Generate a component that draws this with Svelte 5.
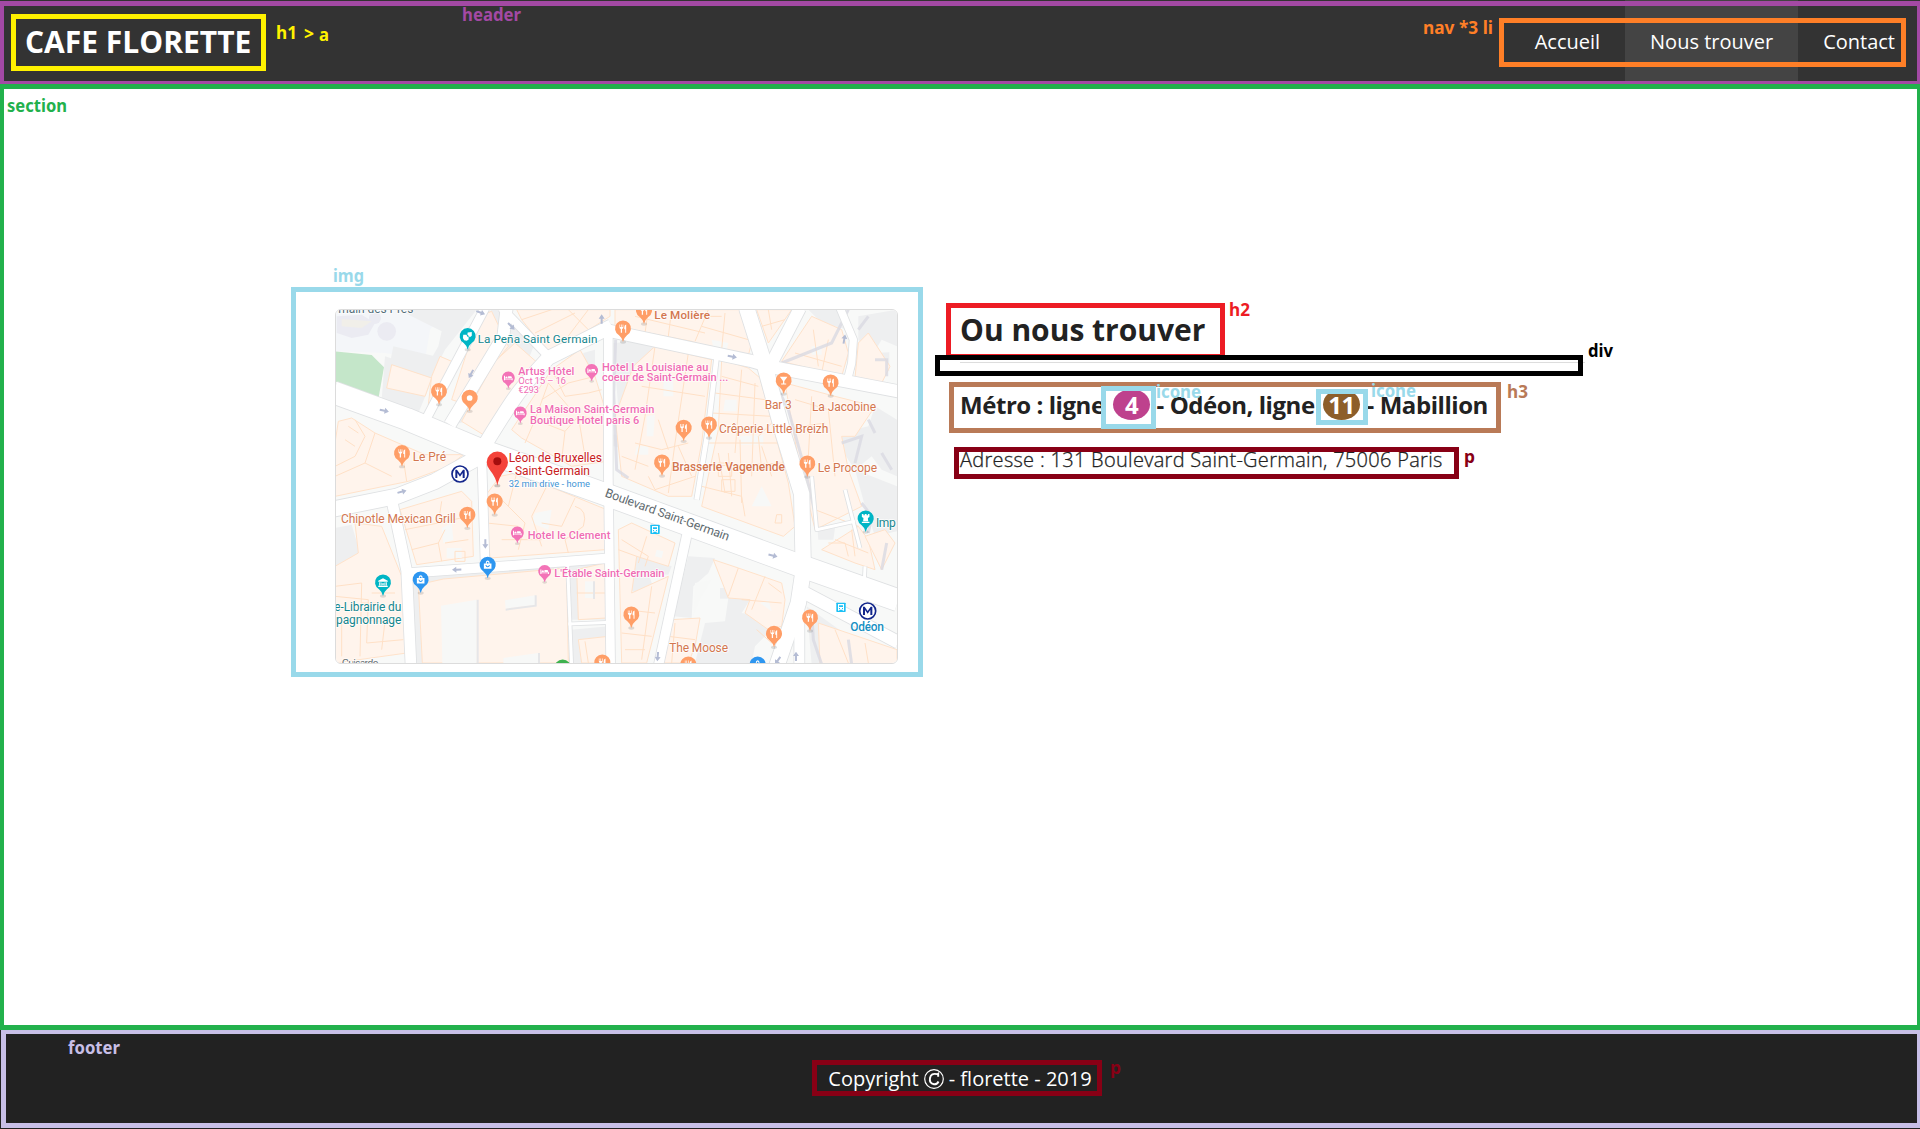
<script>
  const links = [
    { label: 'Accueil', active: false },
    { label: 'Nous trouver', active: true },
    { label: 'Contact', active: false }
  ];

  // Outlined frames drawn over the page: outer left, top, right, bottom.
  const frames = [
    { c: '#a349a4', box: [-1, 1, 1922, 86] },
    { c: '#22b14c', box: [-1, 84, 1922, 1030] },
    { c: '#c8bfe7', box: [1, 1029, 1922, 1128] },
    { c: '#22b14c', box: [-1, 1025, 1925, 1030] },
    { c: '#fff200', box: [11, 14, 266, 71] },
    { c: '#ff7f27', box: [1499, 18, 1906, 67] },
    { c: '#99d9ea', box: [291, 287, 923, 677] },
    { c: '#ed1c24', box: [946, 303, 1225, 359] },
    { c: '#000', box: [935, 355, 1583, 376] },
    { c: '#b97a57', box: [949, 382, 1501, 433] },
    { c: '#99d9ea', box: [1101, 386, 1156, 429] },
    { c: '#99d9ea', box: [1316, 389, 1368, 425] },
    { c: '#880015', box: [954, 447, 1459, 479] },
    { c: '#880015', box: [812, 1060, 1102, 1096] }
  ];

  const notes = [
    { t: 'header', x: 462, y: 21, w: 59, c: '#a349a4' },
    { t: 'h1', x: 276, y: 39, w: 21, c: '#fff200' },
    { t: '>', x: 304, y: 40, w: 10, c: '#fff200' },
    { t: 'a', x: 319, y: 40.5, w: 10, c: '#fff200' },
    { t: 'nav *3 li', x: 1423, y: 34, w: 70, c: '#ff7f27' },
    { t: 'section', x: 7, y: 112, w: 60, c: '#22b14c' },
    { t: 'img', x: 333, y: 282, w: 31, c: '#99d9ea' },
    { t: 'h2', x: 1229, y: 316, w: 21, c: '#ed1c24' },
    { t: 'div', x: 1588, y: 357, w: 25, c: '#000' },
    { t: 'icone', x: 1156, y: 398, w: 45, c: '#99d9ea' },
    { t: 'icone', x: 1371, y: 397, w: 45, c: '#99d9ea' },
    { t: 'h3', x: 1507, y: 398, w: 21, c: '#b97a57' },
    { t: 'p', x: 1464, y: 463, w: 11, c: '#880015' },
    { t: 'footer', x: 68, y: 1054, w: 52, c: '#c8bfe7' },
    { t: 'p', x: 1110, y: 1074, w: 11, c: '#880015' }
  ];

  // The map is drawn at three units per pixel.
  const greys = [
    'M190 0H425L330 120 290 200 270 180 310 110 320 65Z', 'M175 110 300 140 285 195 165 160Z', 'M150 140 300 190 250 310 140 270Z',
    'M390 60 470 0H520L600 100 560 200 480 200Z', 'M375 285 420 260 440 290 420 330 350 345Z',
    'M745 130 780 120V200L740 180Z', 'M0 655 50 645 75 730 35 750 25 785 0 790Z',
    'M40 755H95V800H40Z', 'M105 785H155V815H105Z', 'M835 100 960 90 945 160 890 180 875 240 850 300Z',
    'M1065 0H1100L1090 85 1058 75Z', 'M1020 110 1062 118 1055 165 1015 158Z', 'M835 375H870L880 420 835 410Z',
    'M1420 0H1520L1540 60 1460 40Z', 'M1570 20 1686 0V110L1640 90 1610 140 1570 90Z',
    'M1620 130 1663 128V185H1625Z', 'M1490 375 1600 350 1620 290 1686 330V500L1640 480 1610 440 1560 480Z',
    'M1430 545 1525 530 1515 590 1440 610Z', 'M1560 480 1686 530V665L1620 680 1590 590Z',
    'M1448 665 1500 655 1495 690 1450 690Z', 'M1225 505 1360 520 1355 550 1230 535Z',
    'M905 740 1010 770 1000 795 940 790 960 850 930 880 890 840Z',
    'M1060 740 1140 745 1120 790 1075 830 1070 925 1015 920Z', 'M1180 865 1245 870 1220 910 1290 920 1300 970 1260 1010 1250 1060H1080L1110 940 1170 935Z',
    'M1155 835H1180V867H1155Z', 'M980 1030 1060 1035 1050 1064H975Z', 'M1415 890 1540 980 1550 1064H1430Z',
    'M228 805 300 795 690 765V780L250 825 265 1064H240Z', 'M705 770 810 755 815 930H710Z',
    'M710 960 820 950V1064H712Z'
  ];
  const peaches = [
    'M170 165 290 205 270 260 155 235Z', 'M315 140 350 155 340 200 280 285 290 200Z',
    'M430 20 470 5 520 110 380 280 350 270Z', 'M480 155 540 100 625 175 560 250 530 300 445 375 380 335Z',
    'M545 0H825V20L730 80 640 130 560 30Z', 'M650 180 735 120 780 200 820 330 815 455 710 470 560 385 530 360Z',
    'M10 335 50 325 120 370 270 435 385 435 340 470 220 515 0 560V400Z', 'M495 500 545 490 815 600 812 720 465 745 450 560Z',
    'M195 600 380 545 410 575 415 740 245 765Z', 'M0 770 70 730 60 640 140 650 200 800 215 1030 0 1060Z',
    'M250 825 325 808 695 775 700 1060H262Z',
    'M725 780 810 760 813 925 730 930Z', 'M730 990 820 980V1060H740Z',
    'M840 0H1235L1250 100 1235 155 1070 95 840 50Z', 'M960 110 1130 150 1100 400 1070 560 1000 560 860 500 840 320 895 170Z',
    'M1160 150 1240 175 1275 205 1360 520 1380 650 1345 680 1100 590 1150 360Z', 'M1265 0H1370L1300 100Z',
    'M1430 20 1520 60 1540 130 1520 200 1340 155Z', 'M1570 100 1600 70 1665 170 1640 220 1560 205Z',
    'M1350 220 1500 260 1620 290 1560 380 1520 380 1540 480 1580 590 1440 660 1390 450Z',
    'M1460 720 1570 650 1600 690 1620 780 1560 760Z', 'M1590 680 1650 660 1680 700 1640 780Z',
    'M850 660 890 640 1020 700 1000 770 905 740 890 850 1000 800 935 1060H860Z',
    'M1135 750 1210 775 1340 820 1350 870 1340 950 1300 960 1230 910 1245 870 1180 865Z',
    'M1010 930 1095 925 1080 1010 1060 1060H985Z', 'M1450 940 1686 1020V1064H1455Z'
  ];
  const holes = [
    'M318 888 425 870V1062H322Z', 'M510 872 600 857V885L512 897Z', 'M505 1045 610 1030V1064H505Z',
    'M750 815H775V865H750Z', 'M985 210 1015 200V260H985Z', 'M1215 380 1285 375V405H1215Z',
    'M600 610 650 600 640 660 590 640Z', 'M320 655 350 640 355 690 325 700Z', 'M335 715H380V745H335Z', 'M1170 270H1205V305H1165Z',
    'M1250 590 1280 530 1310 590Z', 'M1080 820 1130 810 1095 870 1075 920Z', 'M1275 880 1300 870 1310 905Z', 'M965 720 985 725 980 745 960 740Z',
    'M1430 110H1460V135H1430Z', 'M1130 90 1180 100 1175 120 1135 115Z', 'M935 320 960 315 955 380H935Z', 'M905 410H940V435H900Z'
  ];
  const lots =
    'M560 30 650 0M600 70 720 10M680 105 760 0M760 60 700 0M570 400 600 330 690 365 730 320 815 330M650 180 690 260 760 250 800 240M600 330 640 220 700 290M690 365 680 450M730 320 750 440M620 270 700 220 780 200' +
    'M60 330 90 380 60 440 0 470M120 370 90 460 170 500M200 415 215 515M0 500 90 460M30 390 60 410M40 350 70 370' +
    'M545 490 520 590 570 640 550 720M640 520 590 620 620 710M720 565 680 650 620 640M720 590Q760 600 745 650L690 690 700 730M490 560 570 640M455 640 550 650M500 690 620 690' +
    'M210 660 310 640 320 575M310 640 400 620M230 720 310 700 330 660M330 700 400 690M310 700 320 755M360 725H390V755H360Z' +
    'M0 830 80 820 75 1040M0 860 100 870 95 1000 205 990M110 850 180 850M60 930 150 935 140 1020M80 880H130M20 920V1040' +
    'M940 0 930 70M1010 0 1000 80M900 20 1110 70M1120 0 1080 95M1170 10 1160 120M1100 50 1240 90M1050 20H1160' +
    'M1160 200 1270 230M1140 250 1290 270M1220 180 1200 430M1260 220 1250 500M1130 310 1310 320M1120 400 1330 400M1150 430 1170 550M1180 430 1190 560M1110 470 1350 460M1215 390 1220 580M1100 530 1220 560 1230 620M1280 410 1310 500M1310 340 1270 380 1280 480M1150 460H1190V500H1150ZM1160 510H1200V545H1160ZM1325 615H1340V640H1320Z' +
    'M960 110 930 320 900 480M1060 130 1020 400 1000 550M920 230 1110 260M900 400 980 420 1060 400M940 500 960 540 1080 500M860 440 940 470M970 330 1000 420M1030 410 1070 500' +
    'M1435 60 1450 170M1480 90 1460 190M1380 130 1520 170M1280 50 1350 30M1300 0 1310 60M1380 270 1480 300 1500 500M1400 350 1470 340M1430 260 1420 440M1440 600 1570 650' +
    'M1480 700 1530 700 1540 740M1550 660 1560 740M1500 690 1600 730M860 690 940 740 930 770M850 720 905 740M935 680 910 760M870 900 960 910M860 970 950 980M950 830 920 1050M870 1020H930' +
    'M1210 775 1180 860M1290 800 1250 900M1220 870 1340 880M1300 820 1340 850M1265 960 1310 1000M1020 940 1010 1060M1000 980 1080 990M1590 1000 1600 1060M1500 960 1540 1060M725 850 810 850M750 995 760 1060';
  const shadows =
    'M842 90 836 250 845 480 880 505M1310 200 1360 300 1410 480 1440 610M1540 0 1490 100 1340 160M1570 60 1600 20M1515 0 1560 120 1555 180M1600 330 1620 370M1520 400 1580 380 1560 460M1640 430 1670 480M1580 580 1610 620 1600 670M1640 780 1655 700M1540 990 1550 1064M1430 900 1435 990 1460 1064M1620 150H1655V200';
  const lightShadows = 'M602 857V888L512 900M428 870V1062M612 1030V1064M777 815V868';
  const roads = [
    ['M450 -5 275 325', 26], ['M515 -5 505 80 345 345', 36], ['M500 -5 640 140', 24],
    ['M445 413Q520 290 550 250T640 145L830 50', 42], ['M815 62 1245 153 1315 173 1690 245', 37],
    ['M1235 -5 1285 153 1345 373 1400 553 1405 780 1390 880 1325 1070', 46], ['M1395 -5 1310 160', 36],
    ['M1515 -5 1555 90 1550 160 1535 220', 22], ['M1146 133 1120 353 1085 570', 14], ['M1060 655 970 1070', 28],
    ['M820 50 820 500 827 1070', 26], ['M-5 598 185 560 300 515 445 435', 46], ['M170 570 215 783 228 1070', 32],
    ['M220 790 530 768 830 745', 28], ['M440 430 450 755', 26], ['M697 743 710 1070', 9], ['M700 943 830 938', 9],
    ['M1430 500 1445 660 1560 635M1530 540 1575 715', 9], ['M1590 770 1588 815', 9],
    ['M1393 840V1070', 30], ['M1410 850 1690 998', 38], ['M-5 248 215 328 440 422 795 548 1395 768 1690 872', 66],
    ['M1310 155V190', 30]
  ];
  const arrows = [
    [437, 9, 20], [529, 50, 45], [408, 193, 118], [148, 303, 12], [800, 28, -90], [1192, 141, 10], [1528, 88, -80],
    [201, 546, -15], [451, 703, 90], [365, 780, 178], [1314, 738, 15], [968, 1041, 95], [1328, 1053, 125], [1383, 1040, -90]
  ];

  const O = '#ff9e67', T = '#00b5c5', K = '#f373b7', B = '#2d96f0';
  const pins = [
    ...[[312, 245], [927, 3], [864, 57], [1487, 219], [1046, 355], [1122, 345], [981, 459], [1417, 462], [201, 431], [397, 616],
      [479, 576], [889, 915], [1425, 924], [1317, 973], [1060, 1065], [802, 1059]].map(([x, y]) => ({ x, y, c: O, k: 'food' })),
    { x: 1346, y: 213, c: O, k: 'bar' }, { x: 404, y: 265, c: O, k: 'dot' },
    { x: 398, y: 80, c: T, k: 'masks' }, { x: 144, y: 819, c: T, k: 'museum' }, { x: 1592, y: 627, c: T, k: 'tower' },
    ...[[520, 205], [770, 183], [556, 310], [547, 670], [629, 786]].map(([x, y]) => ({ x, y, c: K, k: 'bed', s: 0.8 })),
    ...[[257, 810], [458, 766], [1268, 1065]].map(([x, y]) => ({ x, y, c: B, k: 'bag' })),
    { x: 683, y: 1074, c: '#3eb24f', k: 'dot' }
  ];
  const glyphs = {
    food: 'M-11-13V-4Q-11 0-7 1V13H-3V1Q1 0 1-4V-13H-1V-5H-4V-13H-6V-5H-9V-13ZM10-13Q4-11 4-4V2H7V13H10Z',
    bar: 'M-12-12H12L2 1V9H8V12H-8V9H-2V1Z',
    dot: 'M-9 0A9 9 0 1 0 9 0 9 9 0 1 0-9 0Z',
    masks: 'M-14-5H-4L0 2 3 0V10L-3 14-11 12-15 5ZM0-12 13-14V-2L7 3 2-3-1-6Z',
    museum: 'M0-14 15-6V-3H-15V-6ZM-12-1H-8V9H-12ZM8-1H12V9H8ZM-5 9V-1L0 4 5-1V9H2V4L0 7-2 4V9ZM-15 10H15V14H-15Z',
    tower: 'M-12-15H-7V-11H-3V-15H3V-11H7V-15H12V-5L7-2 8 8H-8L-7-2-12-5ZM-12 10H12V14H-12Z',
    bed: 'M-17-9H-13V3H14V-2Q14-7 9-7H-1V1H-12Q-12-6-7-6T-3 1H17V9H13V6H-13V9H-17Z',
    bag: 'M-12-5H-6Q-6-14 0-14T6-5H12V12H-12ZM-3-5H3Q3-10 0-10T-3-5ZM-7 0Q-6 7 0 7T7 0H4Q3 4 0 4T-4 0Z'
  };

  const teal = '#16868e', rust = '#d3764f', pink = '#f06cb4';
  const labels = [
    ['main des Prés', 10, 11, 225, '#546e7a', 36, 400], ['La Peña Saint Germain', 428, 101, 359, teal, 35, 400],
    ['Artus Hôtel', 550, 195, 168, pink, 33, 500], ['Oct 15 – 16', 550, 222, 143, pink, 29, 400], ['€293', 550, 251, 62, pink, 29, 400],
    ['Hotel La Louisiane au', 801, 183, 319, pink, 33, 500], ['coeur de Saint-Germain ...', 801, 215, 379, pink, 33, 500],
    ['La Maison Saint-Germain', 585, 309, 373, pink, 33, 500], ['Boutique Hotel paris 6', 585, 344, 328, pink, 33, 500],
    ['Le Pré', 233, 455, 100, rust, 36, 400], ['Léon de Bruxelles', 521, 457, 280, '#c9211e', 36, 400],
    ['- Saint-Germain', 521, 497, 244, '#c9211e', 36, 400], ['32 min drive - home', 521, 531, 244, '#3e94d6', 28, 400],
    ['Le Molière', 958, 28, 167, rust, 35, 500], ['Bar 3', 1289, 297, 81, rust, 36, 400], ['La Jacobine', 1431, 303, 192, rust, 36, 400],
    ['Crêperie Little Breizh', 1152, 369, 328, rust, 36, 400], ['Brasserie Vagenende', 1011, 483, 339, rust, 36, 500],
    ['Le Procope', 1448, 486, 178, rust, 36, 400], ['Chipotle Mexican Grill', 18, 640, 344, rust, 36, 400],
    ['Hotel le Clement', 578, 687, 248, pink, 33, 500], ["L'Étable Saint-Germain", 658, 801, 330, pink, 33, 500],
    ['e-Librairie du', -2, 903, 201, teal, 36, 400], ['pagnonnage', 3, 944, 196, teal, 36, 400],
    ['The Moose', 1003, 1028, 176, rust, 36, 400], ['Imp', 1623, 651, 59, teal, 36, 400],
    ['Odéon', 1546, 963, 101, '#168fc2', 36, 500], ['Guisarde', 20, 1071, 110, '#6b7377', 33, 400]
  ];
  const metros = [[375, 493], [1598, 904]];
  const buses = [[960, 659], [1518, 893]];
</script>

<div class="page">
  <header>
    <h1><a href="#top">CAFE FLORETTE</a></h1>
    <nav>
      <ul>
        {#each links as l}
          <li class:active={l.active}>{l.label}</li>
        {/each}
      </ul>
    </nav>
  </header>

  <section>
    <svg class="map" viewBox="3 1 1683 1059" preserveAspectRatio="none">
      <rect width="1690" height="1070" fill="#f8f9f8" />
      <path d="M0 0H330L285 60 270 150 150 130 0 125Z" fill="#f4f6f9" />
      <g fill="#ebebf2">
        <path d="M5 20 80 15 120 40 100 75 50 85 5 70Z" />
        <circle cx="155" cy="65" r="28" /><circle cx="120" cy="25" r="18" />
        <path d="M20 28 110 35 80 55 20 50Z" fill="#f1efe9" />
      </g>
      <path d="M0 125 110 136 147 173 131 263 0 215Z" fill="#c4e6c9" />
      {#each greys as d}<path {d} fill="#eeeff0" />{/each}
      {#each peaches as d}<path {d} fill="#fff4ec" stroke="#ffe2ca" stroke-width="3" />{/each}
      {#each holes as d}<path {d} fill="#f7f8f7" />{/each}
      <path d={lots} fill="none" stroke="#ffe0c6" stroke-width="3" />
      <path d={shadows} fill="none" stroke="#d9dae2" stroke-width="9" stroke-opacity=".8" />
      <path d={lightShadows} fill="none" stroke="#e6e6e8" stroke-width="6" />
      <g fill="none" stroke-linejoin="round">
        {#each roads as [d, w]}<path {d} stroke="#dfe1e3" stroke-width={w + 5} />{/each}
        {#each roads as [d, w]}<path {d} stroke="#fff" stroke-width={w} />{/each}
      </g>
      {#each arrows as [x, y, r]}
        <path d="M-14-3H1V-9L14 0 1 9V3H-14Z" fill="#b4bcd4" transform="translate({x} {y}) rotate({r})" />
      {/each}
      {#each buses as [x, y]}
        <g transform="translate({x} {y})">
          <rect x="-14" y="-14" width="28" height="28" rx="2" fill="#1cc0f5" />
          <path d="M-9-10H9V10H5V7H-5V10H-9ZM-6-6V-1H6V-6ZM-6 2V5H-3V2ZM3 2V5H6V2Z" fill="#fff" fill-rule="evenodd" />
        </g>
      {/each}
      {#each pins as p}
        <g transform="translate({p.x} {p.y}) scale({p.s ?? 1})">
          <ellipse cy="40" rx="9" ry="5" fill="#000" opacity=".12" />
          <path d="M0 40Q-2 28-12 20A24 24 0 1 1 12 20Q2 28 0 40Z" fill={p.c} />
          <path d={glyphs[p.k]} fill="#fff" fill-rule="evenodd" transform="scale(.95)" />
        </g>
      {/each}
      {#each metros as [x, y]}
        <g transform="translate({x} {y})">
          <circle r="24" fill="#fff" stroke="#14278c" stroke-width="5" />
          <path d="M-14 12V-13H-9L0 0 9-13H14V12H8V-3L0 8-8-3V12Z" fill="#14278c" />
        </g>
      {/each}
      <ellipse cx="487" cy="528" rx="9" ry="5" fill="#000" opacity=".2" />
      <path d="M487 528Q484 505 464 480A32 32 0 1 1 510 480Q490 505 487 528Z" fill="#f4433a" />
      <circle cx="487" cy="455" r="12" fill="#a50e0e" />
      {#each labels as [t, x, y, w, c, size, weight]}
        <text {x} {y} textLength={w} fill={c} font-size={size} font-weight={weight}>{t}</text>
      {/each}
      <text font-size="37" fill="#5f6b70" textLength="393" transform="translate(808 560) rotate(19.8)">Boulevard Saint-Germain</text>
    </svg>

    <div class="info">
      <h2>Ou nous trouver</h2>
      <h3>
        <span>Métro : ligne</span>
        <span class="badge four">4</span>
        <span>- Odéon, ligne</span>
        <span class="badge eleven">11</span>
        <span>- Mabillion</span>
      </h3>
      <p>Adresse : 131 Boulevard Saint-Germain, 75006 Paris</p>
    </div>
  </section>

  <footer>
    <p>
      <span>Copyright</span>
      <svg class="copy" viewBox="0 0 20 20">
        <circle cx="10" cy="10" r="9.3" fill="none" stroke="#fff" stroke-width="1.2" />
        <path d="M14.2 7.8V4.6L13.2 5.2Q7 3.6 6 9T10 15.3Q13.2 15.5 14.5 12.5" fill="none" stroke="#fff" stroke-width="1.9" />
      </svg>
      <span>- florette - 2019</span>
    </p>
  </footer>

  <svg class="notes" viewBox="0 0 1920 1129">
    {#each frames as { c, box: [l, t, r, b] }}
      <rect x={l + 2.5} y={t + 2.5} width={r - l - 5} height={Math.max(b - t - 5, 0.01)} fill="none" stroke={c} stroke-width="5" />
    {/each}
    {#each notes as n}
      <text x={n.x} y={n.y} textLength={n.w} lengthAdjust="spacingAndGlyphs" fill={n.c}>{n.t}</text>
    {/each}
  </svg>
</div>

<style>
  :global(body) {
    margin: 0;
    overflow: hidden;
  }
  .page {
    position: relative;
    display: flex;
    flex-direction: column;
    height: 1129px;
    font-family: 'Open Sans', sans-serif;
    font-size: 20px;
    color: #222;
    background: #fff;
  }
  h1, h2, h3, p, ul {
    margin: 0;
    padding: 0;
  }
  header {
    display: flex;
    justify-content: space-between;
    height: 84px;
    background: #333;
    color: #fff;
  }
  h1 {
    padding-left: 25px;
    font-size: 30px;
    line-height: 84px;
    font-weight: 700;
  }
  h1 a {
    color: inherit;
    text-decoration: none;
  }
  ul {
    display: flex;
    list-style: none;
  }
  li {
    padding: 0 25px;
    line-height: 84px;
  }
  li.active {
    background: #444;
  }
  section {
    flex: 1;
    display: flex;
    align-items: flex-start;
    gap: 62px;
    padding: 225px 0 0 335px;
  }
  .map {
    box-sizing: border-box;
    width: 563px;
    height: 355px;
    border: 1px solid #dcdcdc;
    border-radius: 6px;
    font-family: Roboto, sans-serif;
  }
  .map text {
    paint-order: stroke;
    stroke: #fff;
    stroke-width: 5px;
    stroke-opacity: 0.8;
  }
  .info {
    width: 625px;
  }
  h2 {
    height: 53px;
    border-bottom: 1px solid #ddd;
    font-size: 30px;
    line-height: 41px;
  }
  h3 {
    display: flex;
    align-items: center;
    height: 33px;
    margin-top: 25px;
    font-size: 24px;
    font-weight: 700;
    letter-spacing: -0.45px;
    line-height: 33px;
    white-space: nowrap;
  }
  .badge {
    width: 37px;
    height: 31px;
    margin: 0 6.5px 0 8.5px;
    border-radius: 50%;
    color: #fff;
    line-height: 31px;
    text-align: center;
  }
  .four {
    background: #be418d;
  }
  .eleven {
    background: #8d5e2a;
  }
  .info p {
    margin-top: 25px;
    line-height: 27px;
    font-weight: 300;
    letter-spacing: 0.3px;
    white-space: nowrap;
    -webkit-text-stroke: 0.3px #222;
  }
  footer {
    display: flex;
    justify-content: center;
    height: 99px;
    background: #222;
    color: #fff;
  }
  footer p {
    display: flex;
    align-items: center;
    gap: 5px;
    height: 97px;
  }
  .copy {
    width: 20px;
    height: 20px;
  }
  .notes {
    position: absolute;
    inset: 0;
    width: 1920px;
    height: 1129px;
    font: 700 18px 'Noto Sans', sans-serif;
  }
</style>
